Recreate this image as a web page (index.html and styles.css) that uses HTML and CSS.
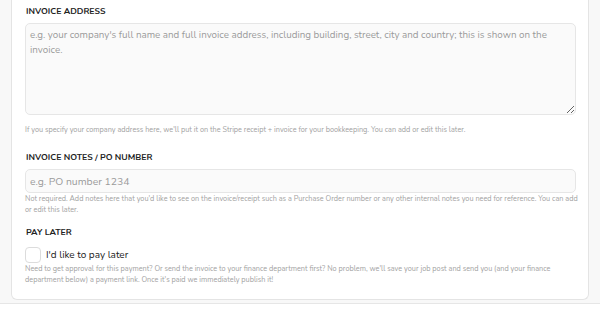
FILE: index.html
```html
<!DOCTYPE html>
<html lang="en">
<head>
    <meta charset="UTF-8">
    <meta name="viewport" content="width=device-width, initial-scale=1.0">
    <title>Invoice details</title>
    <link rel="stylesheet" href="styles.css">
</head>
<body>
    <div class="page">
        <div class="card">
            <div class="field address">
                <label class="field-label" for="address">INVOICE ADDRESS</label>
                <textarea id="address" class="field-area" placeholder="e.g. your company's full name and full invoice address, including building, street, city and country; this is shown on the invoice."></textarea>
                <p class="field-help">If you specify your company address here, we'll put it on the Stripe receipt + invoice for your bookkeeping. You can add or edit this later.</p>
            </div>

            <div class="field notes">
                <label class="field-label" for="notes">INVOICE NOTES / PO NUMBER</label>
                <input id="notes" class="field-input" type="text" placeholder="e.g. PO number 1234">
                <p class="field-help tight">Not required. Add notes here that you'd like to see on the invoice/receipt such as a Purchase Order number or any other internal notes you need for reference. You can add or edit this later.</p>
            </div>

            <div class="field last">
                <div class="field-label">PAY LATER</div>
                <label class="check-row">
                    <span class="check-box"></span>
                    <span class="check-text">I'd like to pay later</span>
                </label>
                <p class="field-help tight">Need to get approval for this payment? Or send the invoice to your finance department first? No problem, we'll save your job post and send you (and your finance department below) a payment link. Once it's paid we immediately publish it!</p>
            </div>
        </div>
    </div>
</body>
</html>
```

FILE: styles.css
```css
body {
    margin: 0;
    background-color: #fff;
    font-family: 'Nunito', 'Lato', sans-serif;
}

.page {
    background-color: #f8f8f8;
    padding: 0 11px 3px 11px;
    border-bottom: 1px solid #e6e6e6;
}

.card {
    background-color: #fff;
    border: 1px solid #e4e4e4;
    border-top: none;
    border-radius: 0 0 6px 6px;
    padding: 5px 3px 13px 13px;
}

.field.address {
    margin-bottom: 15px;
}

.field.notes {
    margin-bottom: 10px;
}

.field-label {
    display: block;
    font-size: 8.7px;
    font-weight: 700;
    color: #222;
    margin: 0 0 5px 1px;
    line-height: 13px;
}

.field-area,
.field-input {
    display: block;
    box-sizing: border-box;
    width: calc(100% - 9px);
    background-color: #fafafa;
    border: 1px solid #e6e6e6;
    border-radius: 5px;
    font-family: inherit;
    color: #333;
    outline: none;
}

.field-area {
    height: 92px;
    padding: 3px 4px;
    font-size: 9.8px;
    line-height: 15px;
}

.field-input {
    height: 24px;
    padding: 0 4px;
    font-size: 10.4px;
}

.field-area::placeholder,
.field-input::placeholder {
    color: #9a9a9a;
}

.field-help {
    margin: 10px 0 0 0;
    font-size: 7.3px;
    line-height: 11px;
    color: #a2a2a2;
}

.field-help.tight {
    margin-top: 1px;
}

.check-row {
    display: flex;
    align-items: center;
    gap: 5px;
    margin-top: 8px;
}

.check-box {
    width: 16px;
    height: 16px;
    box-sizing: border-box;
    border: 1px solid #dcdcdc;
    border-radius: 4px;
    background-color: #fff;
}

.check-text {
    font-size: 10px;
    color: #222;
    line-height: 14px;
}
```
